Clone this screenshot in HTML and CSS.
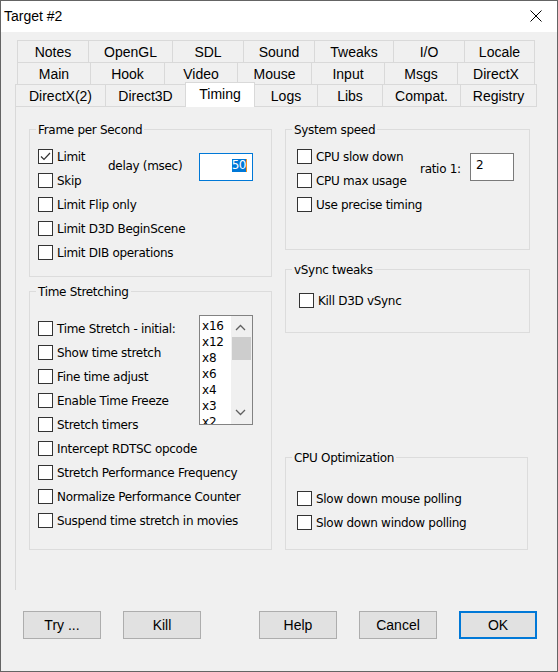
FILE: index.html
```html
<!DOCTYPE html>
<html>
<head>
<meta charset="utf-8">
<title>Target #2</title>
<link rel="stylesheet" href="styles.css">
</head>
<body>
<div class="window">
  <div class="titlebar">
    <span class="title">Target #2</span>
    <svg class="close" width="12" height="12" viewBox="0 0 12 12"><path d="M0.5 0.5 L11.5 11.5 M11.5 0.5 L0.5 11.5" stroke="#000" stroke-width="1" fill="none"/></svg>
  </div>

  <div class="tabs">
    <div class="tabrow r1">
      <div class="tab">Notes</div><div class="tab">OpenGL</div><div class="tab">SDL</div><div class="tab">Sound</div><div class="tab">Tweaks</div><div class="tab">I/O</div><div class="tab last">Locale</div>
    </div>
    <div class="tabrow r2">
      <div class="tab">Main</div><div class="tab">Hook</div><div class="tab">Video</div><div class="tab">Mouse</div><div class="tab">Input</div><div class="tab">Msgs</div><div class="tab last">DirectX</div>
    </div>
    <div class="tabrow r3">
      <div class="tab">DirectX(2)</div><div class="tab">Direct3D</div><div class="tab active">Timing</div><div class="tab nl">Logs</div><div class="tab">Libs</div><div class="tab">Compat.</div><div class="tab last">Registry</div>
    </div>
  </div>

  <div class="panel">
    <div class="col col-left">
      <div class="group g-fps">
        <div class="legend">Frame per Second</div>
        <div class="content">
          <div class="fps-grid">
            <div class="cb r1c1"><span class="box"><svg width="13" height="13" viewBox="0 0 13 13"><polyline points="2,6.5 5,9.5 11,3" fill="none" stroke="#333" stroke-width="1.2"/></svg></span><span class="txt">Limit</span></div>
            <div class="cb r2c1"><span class="box"></span><span class="txt">Skip</span></div>
            <div class="side-label delay">delay (msec)</div>
            <div class="edit focus"><span class="selection">50</span><span class="caret"></span></div>
          </div>
          <div class="cb"><span class="box"></span><span class="txt">Limit Flip only</span></div>
          <div class="cb"><span class="box"></span><span class="txt">Limit D3D BeginScene</span></div>
          <div class="cb"><span class="box"></span><span class="txt">Limit DIB operations</span></div>
        </div>
      </div>

      <div class="group g-time">
        <div class="legend">Time Stretching</div>
        <div class="content time-grid">
          <div class="cb"><span class="box"></span><span class="txt">Time Stretch - initial:</span></div>
          <div class="cb"><span class="box"></span><span class="txt">Show time stretch</span></div>
          <div class="cb"><span class="box"></span><span class="txt">Fine time adjust</span></div>
          <div class="cb"><span class="box"></span><span class="txt">Enable Time Freeze</span></div>
          <div class="cb"><span class="box"></span><span class="txt">Stretch timers</span></div>
          <div class="list">
            <div class="items">
              <div>x16</div><div>x12</div><div>x8</div><div>x6</div><div>x4</div><div>x3</div><div>x2</div>
            </div>
            <div class="sb">
              <div class="arr"><svg width="21" height="21" viewBox="0 0 21 21"><polyline points="5,14 9.5,9.5 14,14" fill="none" stroke="#606060" stroke-width="1.3"/></svg></div>
              <div class="thumb"></div>
              <div class="grow"></div>
              <div class="arr"><svg width="21" height="21" viewBox="0 0 21 21"><polyline points="5,7 9.5,11.5 14,7" fill="none" stroke="#606060" stroke-width="1.3"/></svg></div>
            </div>
          </div>
          <div class="cb full"><span class="box"></span><span class="txt">Intercept RDTSC opcode</span></div>
          <div class="cb full"><span class="box"></span><span class="txt">Stretch Performance Frequency</span></div>
          <div class="cb full"><span class="box"></span><span class="txt">Normalize Performance Counter</span></div>
          <div class="cb full"><span class="box"></span><span class="txt">Suspend time stretch in movies</span></div>
        </div>
      </div>
    </div>

    <div class="col col-right">
      <div class="group g-sys">
        <div class="legend">System speed</div>
        <div class="content sys-grid">
          <div class="cb r1c1"><span class="box"></span><span class="txt">CPU slow down</span></div>
          <div class="cb r2c1"><span class="box"></span><span class="txt">CPU max usage</span></div>
          <div class="cb r3c1"><span class="box"></span><span class="txt">Use precise timing</span></div>
          <div class="side-label ratio">ratio 1:</div>
          <div class="edit plain">2</div>
        </div>
      </div>

      <div class="group g-vsync">
        <div class="legend">vSync tweaks</div>
        <div class="content">
          <div class="cb"><span class="box"></span><span class="txt">Kill D3D vSync</span></div>
        </div>
      </div>

      <div class="group g-cpu">
        <div class="legend">CPU Optimization</div>
        <div class="content">
          <div class="cb"><span class="box"></span><span class="txt">Slow down mouse polling</span></div>
          <div class="cb"><span class="box"></span><span class="txt">Slow down window polling</span></div>
        </div>
      </div>
    </div>
  </div>

  <div class="buttons">
    <button class="btn">Try ...</button>
    <button class="btn">Kill</button>
    <button class="btn help">Help</button>
    <button class="btn">Cancel</button>
    <button class="btn ok">OK</button>
  </div>
</div>
</body>
</html>
```

FILE: styles.css
```css
body {
  margin: 0;
  background: #f0f0f0;
}

.window {
  width: 558px;
  height: 672px;
  box-sizing: border-box;
  border: 1px solid #646464;
  background: #f0f0f0;
  font-family: "DejaVu Sans", sans-serif;
  font-size: 12px;
  letter-spacing: -0.3px;
  color: #000;
  overflow: hidden;
}

/* title bar */
.titlebar {
  height: 31px;
  background: #fff;
  display: flex;
  justify-content: space-between;
  align-items: flex-start;
}
.title {
  font-family: "Liberation Sans", Arial, sans-serif;
  font-size: 14px;
  letter-spacing: 0;
  line-height: 31px;
  padding-left: 3px;
}
.close {
  margin: 9px 15px 0 0;
}

/* tabs */
.tabs {
  margin-top: 8px;
  padding-left: 16px;
  font-family: "Liberation Sans", Arial, sans-serif;
  font-size: 14px;
  letter-spacing: 0;
}
.tabrow {
  display: grid;
  height: 22px;
}
.r1 { grid-template-columns: 71px 84px 71px 71px 79px 71px 71px; }
.r2 { grid-template-columns: 73px 74px 73px 74px 73px 73px 78px; }
.r3 { grid-template-columns: 90px 80px 70px 62px 65px 78px 77px; margin-left: -2px; }
.tab {
  box-sizing: border-box;
  height: 22px;
  border-top: 1px solid #d9d9d9;
  border-left: 1px solid #d9d9d9;
  padding-top: 1px;
  line-height: 21px;
  text-align: center;
  white-space: nowrap;
}
.tab.last { border-right: 1px solid #d9d9d9; }
.tab.nl { border-left: none; }
.tab.active {
  height: 25px;
  margin-top: -2px;
  background: #fff;
  border-right: 1px solid #d9d9d9;
  position: relative;
  z-index: 1;
}

/* tab page */
.panel {
  margin-left: 14px;
  width: 522px;
  height: 484px;
  box-sizing: border-box;
  border-top: 1px solid #d9d9d9;
  border-left: 1px solid #d9d9d9;
  padding: 22px 0 0 13px;
  display: flex;
  gap: 13px;
}
.col {
  display: flex;
  flex-direction: column;
}
.col-left { width: 243px; }
.col-right { width: 245px; }

.group {
  box-sizing: border-box;
  border: 1px solid #dcdcdc;
}
.legend {
  display: table;
  margin: -8px 0 0 6px;
  padding: 0 2px;
  background: #f0f0f0;
  line-height: 16px;
  white-space: nowrap;
}
.g-fps { height: 148px; margin-bottom: 14px; }
.g-time { height: 259px; }
.g-sys { height: 121px; margin-bottom: 19px; }
.g-vsync { height: 64px; }
.g-cpu { height: 93px; width: 243px; margin-top: 124px; }

.g-fps .content { margin: 7px 0 0 8px; }
.g-time .content { margin: 17px 0 0 8px; }
.g-sys .content { margin: 7px 0 0 11px; }
.g-vsync .content { margin: 11px 0 0 13px; }
.g-cpu .content { margin: 21px 0 0 11px; }

/* checkbox rows */
.cb {
  display: flex;
  align-items: flex-start;
  height: 24px;
  white-space: nowrap;
}
.txt {
  line-height: 25px;
}
.box {
  flex: none;
  width: 15px;
  height: 15px;
  box-sizing: border-box;
  border: 1px solid #333;
  background: #fff;
  margin: 4px 4px 0 0;
}
.box svg { display: block; }

.r1c1 { grid-column: 1; grid-row: 1; }
.r2c1 { grid-column: 1; grid-row: 2; }
.r3c1 { grid-column: 1; grid-row: 3; }

.fps-grid {
  display: grid;
  grid-template-columns: 70px 91px 54px;
  grid-template-rows: 24px 24px;
}
.sys-grid {
  display: grid;
  grid-template-columns: 123px 50px 44px;
  grid-template-rows: 24px 24px 24px;
}
.side-label {
  grid-column: 2;
  grid-row: 1 / 3;
  white-space: nowrap;
}
.delay {
  margin-top: 8px;
  line-height: 26px;
}
.ratio {
  align-self: center;
  line-height: 16px;
}

.edit {
  grid-column: 3;
  grid-row: 1 / 3;
  margin-top: 8px;
  height: 28px;
  box-sizing: border-box;
  background: #fff;
}
.edit.focus {
  border: 1px solid #0078d7;
  display: flex;
  justify-content: flex-end;
  align-items: flex-start;
  padding: 5px 5px 0 0;
}
.selection {
  background: #0078d7;
  color: #fff;
  height: 13px;
  line-height: 13px;
  letter-spacing: -0.5px;
}
.caret {
  width: 1px;
  height: 13px;
  background: #f7941d;
}
.edit.plain {
  border: 1px solid #7a7a7a;
  padding: 3px 0 0 5px;
  line-height: 16px;
}

/* time stretching */
.time-grid {
  display: grid;
  grid-template-columns: 161px 54px;
  grid-auto-rows: 24px;
}
.time-grid .cb { grid-column: 1; }
.time-grid .cb.full { grid-column: 1 / 3; }

.list {
  grid-column: 2;
  grid-row: 1 / 6;
  align-self: start;
  margin-top: -2px;
  height: 110px;
  box-sizing: border-box;
  border: 1px solid #828282;
  background: #fff;
  display: flex;
  overflow: hidden;
}
.items {
  flex: 1;
  padding: 2px 0 0 2px;
  line-height: 16px;
  letter-spacing: -0.2px;
}
.sb {
  width: 21px;
  background: #f0f0f0;
  display: flex;
  flex-direction: column;
}
.arr { height: 21px; flex: none; }
.arr svg { display: block; }
.thumb {
  flex: none;
  height: 23px;
  width: 19px;
  margin-left: 1px;
  background: #cdcdcd;
}
.grow { flex: 1; }

/* buttons */
.buttons {
  display: flex;
  gap: 22px;
  margin-top: 21px;
  padding-left: 22px;
}
.btn {
  width: 78px;
  height: 28px;
  box-sizing: border-box;
  border: 1px solid #adadad;
  background: #e1e1e1;
  padding: 0;
  font-family: "Liberation Sans", Arial, sans-serif;
  font-size: 14px;
  color: #000;
  display: flex;
  align-items: center;
  justify-content: center;
}
.btn.help { margin-left: 36px; }
.btn.ok { border: 2px solid #0078d7; }
```
